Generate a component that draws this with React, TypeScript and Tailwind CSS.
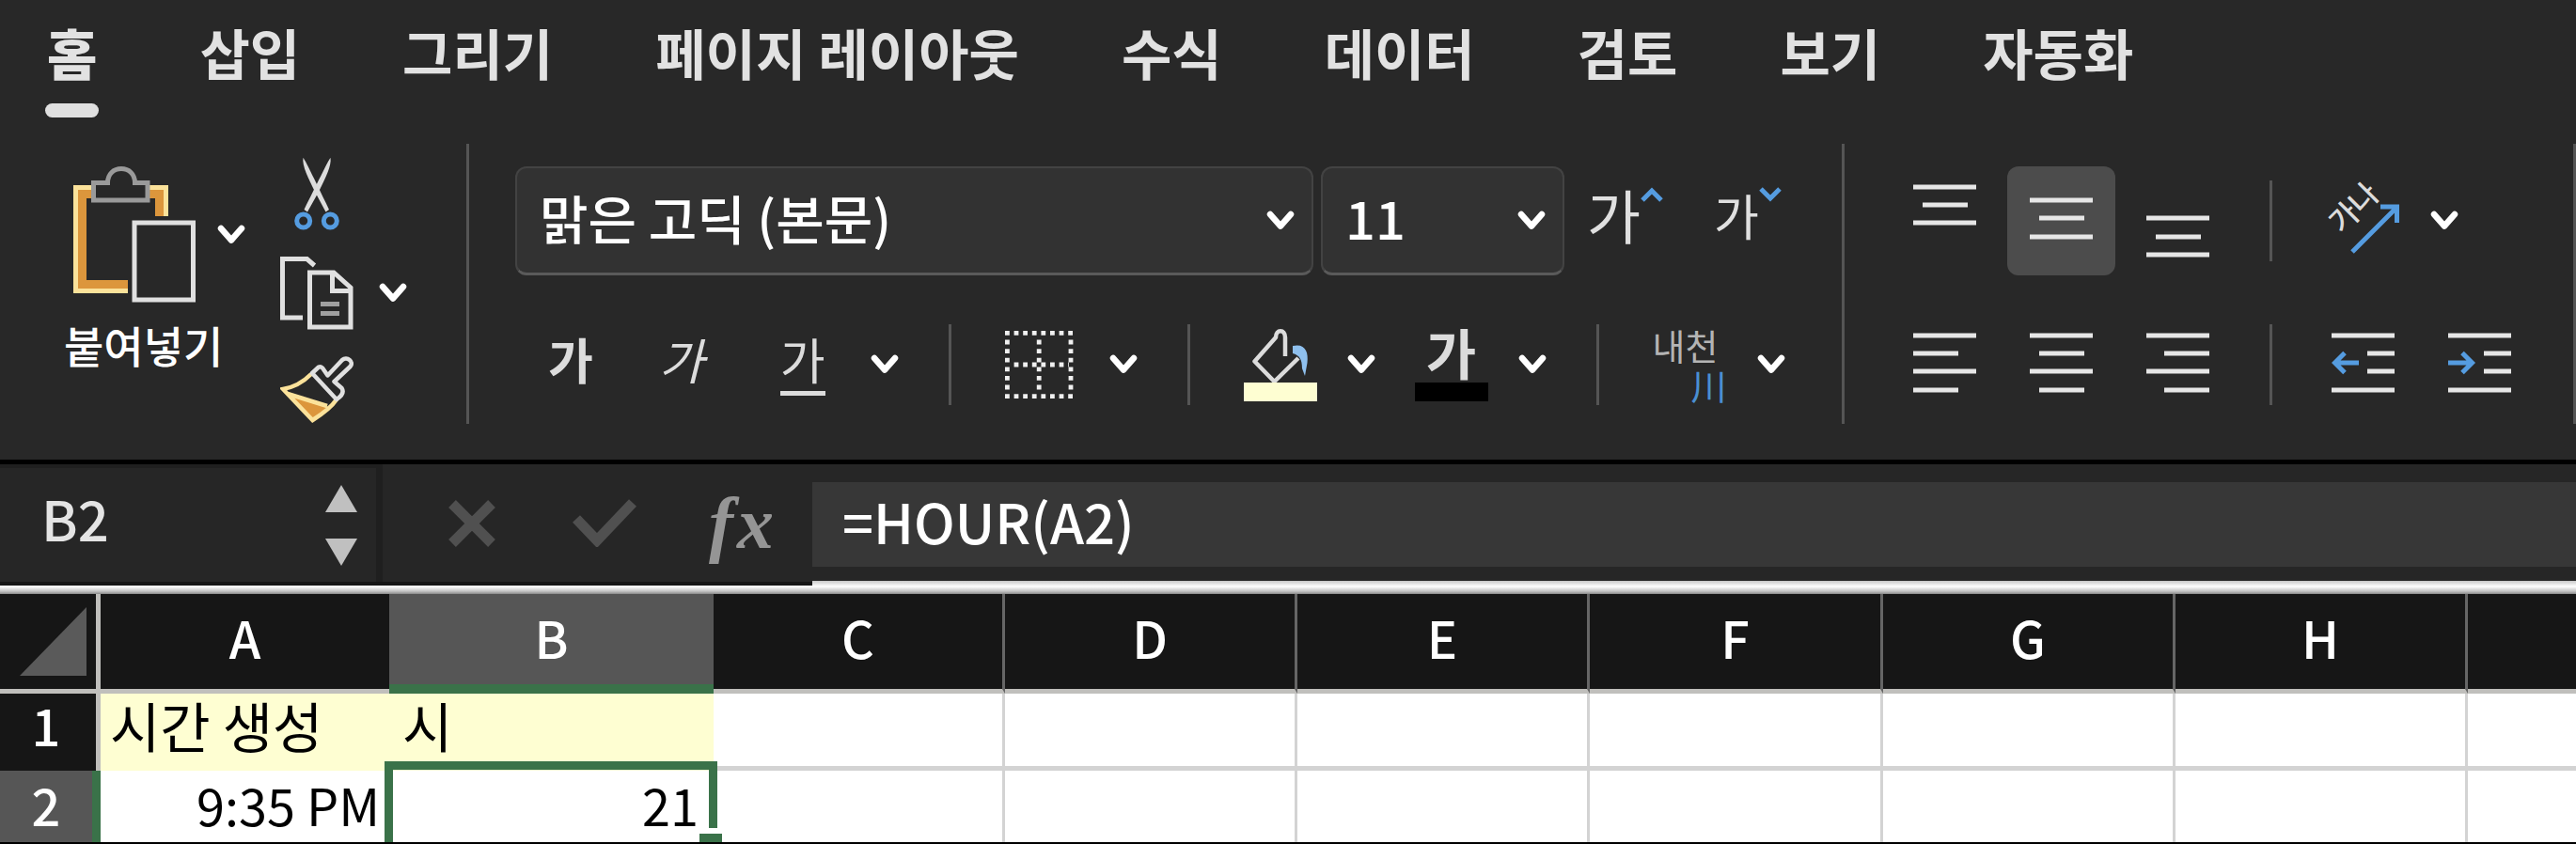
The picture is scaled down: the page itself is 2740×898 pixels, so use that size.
import type { ReactNode } from 'react';

const tabs = ['홈', '삽입', '그리기', '페이지 레이아웃', '수식', '데이터', '검토', '보기', '자동화'];

const columns = [
  { id: 'A', width: 'w-[307px]' },
  { id: 'B', width: 'w-[345px]' },
  { id: 'C', width: 'w-[310px]' },
  { id: 'D', width: 'w-[311px]' },
  { id: 'E', width: 'w-[311px]' },
  { id: 'F', width: 'w-[312px]' },
  { id: 'G', width: 'w-[311px]' },
  { id: 'H', width: 'w-[311px]' },
];

const emptyColumns = ['C', 'D', 'E', 'F', 'G', 'H', 'I'];

function Chevron() {
  return (
    <svg width="30" height="22" viewBox="0 0 30 22" fill="none" className="block shrink-0">
      <path d="M4 4 L15 16.5 L26 4" stroke="#fff" strokeWidth="6.5" strokeLinecap="round" strokeLinejoin="round" />
    </svg>
  );
}

function ChevronButton({ label, className = '' }: { label: string; className?: string }) {
  return (
    <button type="button" aria-label={label} className={`shrink-0 ${className}`}>
      <Chevron />
    </button>
  );
}

function Caret({ up = false }: { up?: boolean }) {
  return (
    <svg width="24" height="16" viewBox="0 0 24 16" fill="none" className="block">
      <path d={up ? 'M2 14 L12 4 L22 14' : 'M2 2 L12 12 L22 2'} stroke="#559ce0" strokeWidth="5" />
    </svg>
  );
}

function Divider({ className = '' }: { className?: string }) {
  return <div className={`w-[3px] shrink-0 bg-[#555] ${className}`} />;
}

function PasteIcon() {
  return (
    <svg width="130" height="145" viewBox="0 0 130 145" fill="none">
      <path d="M19 27.5 H7.5 V127.5 H58" stroke="#dc963c" strokeWidth="13" />
      <path d="M81 27.5 H93.5 V53" stroke="#dc963c" strokeWidth="13" />
      <path d="M20 22.5 H2.5 V132.5 H58" stroke="#fbe29a" strokeWidth="5" />
      <path d="M81 22.5 H98.5 V53" stroke="#fbe29a" strokeWidth="5" />
      <path
        d="M21.5 17.5 H36.5 C36.5 8 43 2.5 51 2.5 C59 2.5 65.5 8 65.5 17.5 H79 V36 H21.5 Z"
        fill="#282828"
        stroke="#9a9a9a"
        strokeWidth="5"
      />
      <rect x="65" y="60" width="62.5" height="82" stroke="#e0e0e0" strokeWidth="5" />
    </svg>
  );
}

function CutIcon() {
  return (
    <svg width="48" height="77" viewBox="0 0 48 77" fill="none">
      <path d="M9.5 0 C10.5 0 26 32 37 55 L33.5 57.5 L22 36 C15 22 8 8 9.5 0 Z" fill="#dcdcdc" />
      <path d="M38.5 0 C37.5 0 22 32 10.5 55 L14 57.5 L26 36 C33 22 40 8 38.5 0 Z" fill="#dcdcdc" />
      <circle cx="9.7" cy="67" r="7" stroke="#559ce0" strokeWidth="5" />
      <circle cx="38.3" cy="67" r="7" stroke="#559ce0" strokeWidth="5" />
    </svg>
  );
}

function CopyIcon() {
  return (
    <svg width="78" height="78" viewBox="0 0 78 78" fill="none">
      <path d="M36.5 9.5 L28.5 2.5 H2.5 V65 H24" stroke="#e0e0e0" strokeWidth="5" />
      <path d="M31.5 17 H57 L75 33 V75 H31.5 Z" stroke="#e0e0e0" strokeWidth="5" />
      <path d="M55.5 17 V36.5 H75" stroke="#e0e0e0" strokeWidth="5" />
      <path d="M43 50.5 H63 M43 60.5 H63" stroke="#a0a0a0" strokeWidth="5" />
    </svg>
  );
}

function BrushIcon() {
  return (
    <svg width="78" height="72" viewBox="0 0 78 72" fill="none">
      <path d="M8 38 L52 54 L34.5 69 Z" fill="#dc963c" />
      <path
        d="M33 19 C25 27 15 33 3 35 L34.5 68 C44 62 54 55 60 46 M8 40 L50 53"
        stroke="#fbe29a"
        strokeWidth="4.5"
      />
      <path
        d="M34 18 L41 11.5 Q43 10.5 45 12.5 L50.5 20.5 L66 4 C71 -0.5 79 6 74.5 11 L57.5 27 L65.5 34 C68 38 66 42 60 46 Z"
        stroke="#e0e0e0"
        strokeWidth="4.5"
        strokeLinejoin="round"
      />
    </svg>
  );
}

function BordersIcon() {
  return (
    <svg width="74" height="72" viewBox="0 0 74 72" fill="none">
      <g stroke="#f0f0f0" strokeWidth="4.8" strokeDasharray="4.8 4.8">
        <path d="M0 2.4 H73" />
        <path d="M0 69.6 H73" />
        <path d="M9.6 36 H34 M38.4 36 H68" />
        <path d="M2.4 9.6 V67" />
        <path d="M70 9.6 V67" />
        <path d="M36.2 9.6 V34 M36.2 38.4 V67" />
      </g>
    </svg>
  );
}

function BucketIcon() {
  return (
    <svg width="60" height="57" viewBox="0 0 60 57" fill="none">
      <path
        d="M35 29 V9 C35 0 25 0 25 9 L2.5 34.5 L23.5 56 L49 31"
        stroke="#dcdcdc"
        strokeWidth="4.5"
        strokeLinejoin="round"
      />
      <path d="M43 18 C56 15 60 24 58.5 36 L56 50 L53 42 C53 32 50 28 43 26 Z" fill="#8fc0ee" />
    </svg>
  );
}

function OrientationIcon() {
  return (
    <svg width="78" height="74" viewBox="0 0 78 74" fill="none" className="block overflow-visible">
      <text
        x="0"
        y="0"
        transform="translate(16 52) rotate(-45)"
        fontSize="32"
        fontWeight="500"
        fill="#dcdcdc"
        fontFamily="'Noto Sans CJK KR', sans-serif"
      >
        가나
      </text>
      <path d="M27 70 L73 24 M57 22 H74.5 V39" stroke="#559ce0" strokeWidth="5" />
    </svg>
  );
}

type Line = [x: number, y: number, width: number];

function LinesIcon({ lines, height, children }: { lines: Line[]; height: number; children?: ReactNode }) {
  return (
    <svg width="67" height={height} viewBox={`0 0 67 ${height}`} fill="none" className="block">
      {lines.map(([x, y, width]) => (
        <rect key={y} x={x} y={y - 2.5} width={width} height="5" fill="#e6e6e6" />
      ))}
      {children}
    </svg>
  );
}

function IconButton({ label, active = false, children }: { label: string; active?: boolean; children: ReactNode }) {
  return (
    <button
      type="button"
      aria-label={label}
      aria-pressed={active}
      className={`flex w-[115px] shrink-0 justify-center rounded-xl ${active ? 'bg-[#4c4c4c]' : ''}`}
    >
      {children}
    </button>
  );
}

function RibbonSelect({ label, value, className }: { label: string; value: string; className: string }) {
  return (
    <div className={`relative h-[116px] shrink-0 ${className}`}>
      <select
        aria-label={label}
        className="size-full appearance-none rounded-xl border-2 border-b-3 border-[#434343] border-b-[#5a5a5a] bg-[#323232] px-6 pb-2 text-[56px] font-medium text-white"
      >
        <option>{value}</option>
      </select>
      <div className="pointer-events-none absolute inset-y-0 right-5 flex items-center">
        <Chevron />
      </div>
    </div>
  );
}

function Tabs() {
  return (
    <nav aria-label="리본 탭" className="h-[153px] pt-[26px]">
      <ul className="flex gap-[109px] pl-[50px]">
        {tabs.map((tab, i) => (
          <li key={tab} className="relative shrink-0">
            <button
              type="button"
              className={`block text-[58px] leading-[58px] whitespace-nowrap text-[#e2e2e2] ${i === 0 ? 'font-black' : 'font-bold'}`}
            >
              {tab}
            </button>
            {i === 0 && <span className="absolute -inset-x-0.5 top-[84px] h-[15px] rounded-full bg-[#e0e0e0]" />}
          </li>
        ))}
      </ul>
    </nav>
  );
}

function ClipboardGroup() {
  return (
    <div className="flex shrink-0 gap-[37px] pl-[68px]">
      <div className="pt-6">
        <div className="flex items-center gap-[23px] pl-2.5">
          <button type="button" aria-label="붙여넣기">
            <PasteIcon />
          </button>
          <ChevronButton label="붙여넣기 옵션" />
        </div>
        <p className="mt-5 text-[46px] leading-[48px] font-medium text-white">붙여넣기</p>
      </div>
      <div className="flex flex-col gap-7 pt-[15px]">
        <button type="button" aria-label="잘라내기" className="flex w-[78px] justify-center">
          <CutIcon />
        </button>
        <div className="flex items-center gap-[27px]">
          <button type="button" aria-label="복사">
            <CopyIcon />
          </button>
          <ChevronButton label="복사 옵션" />
        </div>
        <button type="button" aria-label="서식 복사" className="w-[78px]">
          <BrushIcon />
        </button>
      </div>
    </div>
  );
}

function FontGroup() {
  return (
    <div className="flex shrink-0 flex-col gap-[52px] pt-6 pr-[60px] pl-[49px]">
      <div className="flex">
        <RibbonSelect label="글꼴" value="맑은 고딕 (본문)" className="w-[849px]" />
        <RibbonSelect label="글꼴 크기" value="11" className="ml-2 w-[259px]" />
        <button type="button" aria-label="글꼴 크게" className="ml-6 flex items-start pt-[22px] text-[#e0e0e0]">
          <span className="text-[62px] leading-[58px]">가</span>
          <Caret up />
        </button>
        <button type="button" aria-label="글꼴 작게" className="ml-[54px] flex items-start pt-[22px] text-[#e0e0e0]">
          <span className="pt-1 text-[52px] leading-[52px]">가</span>
          <Caret />
        </button>
      </div>

      <div className="flex h-[86px] items-center text-[52px] leading-[52px] text-[#dcdcdc]">
        <div className="ml-[35px] flex">
          <button type="button" aria-label="굵게" className="pb-3 font-bold">
            가
          </button>
          <button type="button" aria-label="기울임꼴" className="ml-[70px] pb-3 italic">
            가
          </button>
          <button type="button" aria-label="밑줄" className="ml-[81px] border-b-5 border-[#dcdcdc] pb-2">
            가
          </button>
        </div>
        <ChevronButton label="밑줄 옵션" className="ml-12" />
        <Divider className="ml-[53px] h-full" />
        <button type="button" aria-label="테두리" className="ml-[57px]">
          <BordersIcon />
        </button>
        <ChevronButton label="테두리 옵션" className="ml-[37px]" />
        <Divider className="ml-[53px] h-full" />
        <button type="button" aria-label="채우기 색" className="ml-[57px] flex w-[78px] flex-col items-center">
          <BucketIcon />
          <span className="h-5 w-full bg-[#fefed2]" />
        </button>
        <ChevronButton label="채우기 색 옵션" className="ml-8" />
        <button type="button" aria-label="글꼴 색" className="ml-[42px] flex w-[78px] flex-col items-center">
          <span className="h-[57px] text-[58px] leading-[48px] font-bold">가</span>
          <span className="h-5 w-full bg-black" />
        </button>
        <ChevronButton label="글꼴 색 옵션" className="ml-8" />
        <Divider className="ml-[53px] h-full" />
        <button
          type="button"
          aria-label="윗주 필드"
          className="ml-12 flex w-[88px] flex-col text-[38px] leading-[42px]"
        >
          <span className="text-[#b4b4b4]">내천</span>
          <span className="self-end text-[#4a8fd2]">川</span>
        </button>
        <ChevronButton label="윗주 옵션" className="ml-8" />
      </div>
    </div>
  );
}

function AlignmentGroup() {
  return (
    <div className="flex min-w-0 flex-1 flex-col gap-[52px] pt-6 pl-[49px]">
      <div className="flex items-center">
        <div className="flex shrink-0 gap-[9px]">
          <IconButton label="위쪽 맞춤">
            <LinesIcon height={116} lines={[[0, 22, 67], [10, 41, 48], [0, 60, 67]]} />
          </IconButton>
          <IconButton label="가운데 맞춤(세로)" active>
            <LinesIcon height={116} lines={[[0, 36, 67], [10, 55, 48], [0, 75, 67]]} />
          </IconButton>
          <IconButton label="아래쪽 맞춤">
            <LinesIcon height={116} lines={[[0, 55, 67], [10, 75, 48], [0, 94, 67]]} />
          </IconButton>
        </div>
        <Divider className="ml-10 h-[86px]" />
        <button type="button" aria-label="방향" className="ml-[58px]">
          <OrientationIcon />
        </button>
        <ChevronButton label="방향 옵션" className="ml-8" />
      </div>

      <div className="flex h-[86px]">
        <div className="flex shrink-0 gap-[9px]">
          <IconButton label="왼쪽 맞춤">
            <LinesIcon height={86} lines={[[0, 12, 67], [0, 31, 48], [0, 50, 67], [0, 70, 48]]} />
          </IconButton>
          <IconButton label="가운데 맞춤">
            <LinesIcon height={86} lines={[[0, 12, 67], [10, 31, 48], [0, 50, 67], [10, 70, 48]]} />
          </IconButton>
          <IconButton label="오른쪽 맞춤">
            <LinesIcon height={86} lines={[[0, 12, 67], [19, 31, 48], [0, 50, 67], [19, 70, 48]]} />
          </IconButton>
        </div>
        <Divider className="ml-10" />
        <div className="ml-[39px] flex shrink-0 gap-[9px]">
          <IconButton label="내어쓰기">
            <LinesIcon height={86} lines={[[0, 12, 67], [38, 31, 29], [38, 50, 29], [0, 70, 67]]}>
              <path d="M29 41 H3 M14 30.5 L3.5 41 L14 51.5" stroke="#559ce0" strokeWidth="5" />
            </LinesIcon>
          </IconButton>
          <IconButton label="들여쓰기">
            <LinesIcon height={86} lines={[[0, 12, 67], [38, 31, 29], [38, 50, 29], [0, 70, 67]]}>
              <path d="M0 41 H26 M15 30.5 L25.5 41 L15 51.5" stroke="#559ce0" strokeWidth="5" />
            </LinesIcon>
          </IconButton>
        </div>
      </div>
    </div>
  );
}

function FormulaBar() {
  return (
    <div className="flex items-start border-t-5 border-black bg-[linear-gradient(to_bottom,#c8c8c8_124px,#fff_130px,#c4c4c4_135px,#8a8a8a_138px)] pb-[9px]">
      <div className="flex h-[129px] w-[864px] shrink-0 border-b-4 border-[#151515] bg-[#262626]">
        <div className="flex w-[407px] items-center justify-between border-t-4 border-r-7 border-[#1f1f1f] pr-5 pl-11">
          <input
            aria-label="이름 상자"
            defaultValue="B2"
            className="h-[90px] w-[240px] pb-4 text-[58px] font-medium text-[#e4e4e4]"
          />
          <div className="flex flex-col gap-7">
            <button type="button" aria-label="이전 이름">
              <svg width="34" height="29" viewBox="0 0 34 29" className="block">
                <path d="M17 0 L34 29 H0 Z" fill="#c0c0c0" />
              </svg>
            </button>
            <button type="button" aria-label="다음 이름">
              <svg width="34" height="29" viewBox="0 0 34 29" className="block">
                <path d="M0 0 H34 L17 29 Z" fill="#c0c0c0" />
              </svg>
            </button>
          </div>
        </div>
        <div className="flex flex-1 items-center pl-[70px]">
          <button type="button" aria-label="취소">
            <svg width="50" height="50" viewBox="0 0 50 50" className="block">
              <path d="M4 4 L46 46 M46 4 L4 46" stroke="#505050" strokeWidth="11" />
            </svg>
          </button>
          <button type="button" aria-label="입력" className="ml-[82px]">
            <svg width="69" height="51" viewBox="0 0 69 51" fill="none" className="block">
              <path d="M4 21 L26 44 L64 4" stroke="#505050" strokeWidth="11" />
            </svg>
          </button>
          <button
            type="button"
            aria-label="함수 삽입"
            className="ml-[76px] flex gap-1 font-['Liberation_Serif',serif] text-[78px] leading-[78px] font-bold text-[#959595] italic"
          >
            <span>f</span>
            <span>x</span>
          </button>
        </div>
      </div>
      <div className="h-[124px] min-w-0 flex-1 bg-[#262626] pt-[19px]">
        <input
          aria-label="수식 입력줄"
          defaultValue="=HOUR(A2)"
          className="block h-[90px] w-full bg-[#373737] pb-2 pl-8 text-[58px] font-medium text-white"
        />
      </div>
    </div>
  );
}

function Sheet() {
  return (
    <table className="w-full table-fixed border-separate border-spacing-0 border-b-2 border-black bg-white text-[54px] leading-[54px] text-black">
      <thead>
        <tr className="h-[106px] bg-[#161616] text-white">
          <th className="w-[107px] border-r-5 border-b-5 border-[#c0bfbc] p-0">
            <svg width="71" height="73" viewBox="0 0 71 73" className="ml-[21px] block">
              <path d="M71 0 V73 H0 Z" fill="#5a5a5a" />
            </svg>
          </th>
          {columns.map(({ id, width }) => (
            <th
              key={id}
              scope="col"
              className={`p-0 font-medium ${width} ${
                id === 'B'
                  ? 'border-b-10 border-[#3a7249] bg-[#565656] pb-1'
                  : id === 'A'
                    ? 'border-b-5 border-[#c0bfbc] pb-2.5'
                    : 'border-r-3 border-b-5 border-r-[#666] border-b-[#c0bfbc] pb-2.5'
              }`}
            >
              {id}
            </th>
          ))}
          <th className="border-b-5 border-[#c0bfbc] p-0" />
        </tr>
      </thead>
      <tbody>
        <tr className="h-[82px]">
          <th scope="row" className="border-r-5 border-[#c0bfbc] bg-[#161616] p-0 pr-1 pb-4 font-medium text-white">
            1
          </th>
          <td className="bg-[#fefed2] px-2.5 py-0 pb-4 text-[58px]">시간 생성</td>
          <td className="bg-[#fefed2] px-3.5 py-0 pb-4 text-[58px]">시</td>
          {emptyColumns.map((id) => (
            <td key={id} className="border-r-3 border-b-5 border-[#d3d3d3] p-0 last:border-r-0" />
          ))}
        </tr>
        <tr className="h-[76px]">
          <th scope="row" className="border-r-9 border-[#3a7249] bg-[#565656] p-0 pb-1 font-medium text-white">
            2
          </th>
          <td className="px-2.5 py-0 pb-1 text-right">9:35 PM</td>
          <td className="relative px-4 py-0 pb-1 text-right">
            21
            <div className="absolute -top-2.5 -right-1 bottom-0 -left-[5px] border-t-9 border-l-9 border-[#3a7249]" />
            <div className="absolute -top-2.5 -right-1 bottom-[15px] w-[9px] bg-[#3a7249]" />
            <div className="absolute -right-[9px] bottom-0 h-[9px] w-6 bg-[#3a7249]" />
          </td>
          {emptyColumns.map((id) => (
            <td key={id} className="border-r-3 border-[#d3d3d3] p-0 last:border-r-0" />
          ))}
        </tr>
      </tbody>
    </table>
  );
}

export default function App() {
  return (
    <div className="overflow-hidden bg-[#282828] font-['Noto_Sans_CJK_KR',sans-serif]">
      <Tabs />
      <div className="flex pb-[38px]">
        <ClipboardGroup />
        <Divider className="ml-[63px]" />
        <FontGroup />
        <Divider />
        <AlignmentGroup />
        <Divider />
      </div>
      <FormulaBar />
      <Sheet />
    </div>
  );
}
